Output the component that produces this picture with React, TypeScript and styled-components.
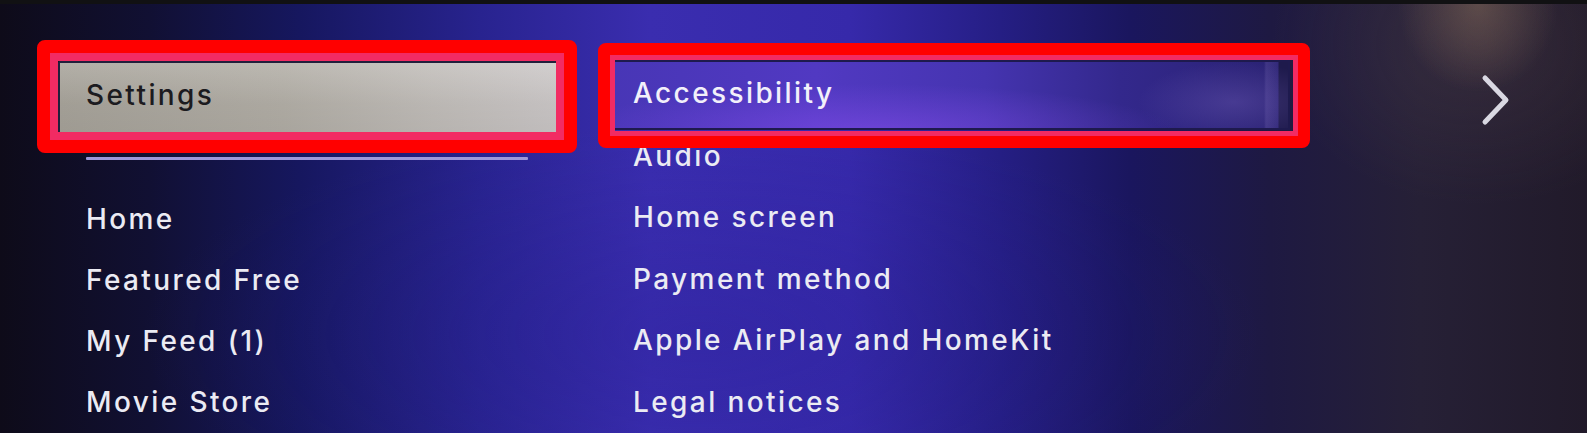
import styled, { createGlobalStyle } from 'styled-components';

const GlobalStyle = createGlobalStyle`
  html, body {
    margin: 0;
    padding: 0;
    background: #111113;
  }
  * {
    box-sizing: border-box;
  }
`;

const Screen = styled.div`
  width: 1587px;
  height: 433px;
  overflow: hidden;
  display: flex;
  flex-direction: column;
  font-family: Inter, 'DejaVu Sans', sans-serif;
  color: #ececf4;
`;

const TopStrip = styled.div`
  height: 4px;
  background: #111113;
`;

const Stage = styled.div`
  flex: 1;
  display: flex;
  align-items: flex-start;
  padding: 57px 0 0 58px;
  background:
    radial-gradient(ellipse 100px 110px at 1478px 0px, rgba(160, 128, 100, 0.4), rgba(160, 128, 100, 0) 80%),
    radial-gradient(ellipse 260px 200px at 1480px 40px, rgba(90, 72, 80, 0.3), rgba(90, 72, 80, 0) 80%),
    radial-gradient(ellipse 700px 260px at 700px 330px, rgba(40, 30, 150, 0.3), rgba(40, 30, 150, 0) 80%),
    linear-gradient(90deg, #0e0b19 0px, #111033 150px, #16175f 300px, #28238f 480px, #3a2daf 650px, #3629aa 850px, #251e84 1000px, #1a165e 1130px, #1e1942 1270px, #262036 1420px, #211a2a 1587px);
`;

const Column = styled.div<{ $width: number; $gap?: number }>`
  width: ${(p) => p.$width}px;
  margin-right: ${(p) => p.$gap ?? 0}px;
  display: flex;
  flex-direction: column;
`;

const FocusBox = styled.div<{ $variant: 'grey' | 'purple' }>`
  position: relative;
  z-index: 2;
  display: flex;
  align-items: center;
  font-size: 28px;
  font-weight: 500;
  letter-spacing: 2.4px;
  ${(p) =>
    p.$variant === 'grey'
      ? `
    height: 73px;
    padding: 0 0 4px 26px;
    border: 2px solid #221f3c;
    border-radius: 2px;
    color: #1c1b1f;
    background:
      linear-gradient(180deg, rgba(255,255,255,0.12), rgba(0,0,0,0.04) 60%, rgba(0,0,0,0.06)),
      linear-gradient(90deg, #a8a49b 0%, #b3afa7 45%, #c2beba 75%, #ccc8c8 100%);
  `
      : `
    margin-top: -1px;
    height: 70px;
    padding: 0 0 3px 19px;
    border: 2px solid #1e1a4e;
    color: #f2f0fa;
    background:
      radial-gradient(ellipse 380px 60px at 260px 70px, rgba(140, 80, 240, 0.5), rgba(140, 80, 240, 0) 80%),
      radial-gradient(ellipse 120px 50px at 620px 40px, rgba(120, 100, 190, 0.35), rgba(120, 100, 190, 0) 80%),
      linear-gradient(90deg, rgba(0,0,0,0) 0, rgba(0,0,0,0) 650px, rgba(110, 96, 170, 0.3) 652px, rgba(110, 96, 170, 0.12) 664px, #1e1a4c 665px),
      linear-gradient(90deg, #4836b6 0%, #5139c2 30%, #4534b0 55%, #33288c 75%, #2a2272 100%);
  `}

  &::before {
    content: '';
    position: absolute;
    pointer-events: none;
    ${(p) =>
      p.$variant === 'grey'
        ? `
      inset: -23px -19px -21px -23px;
      border: 13px solid #ff0000;
      border-radius: 8px;
      box-shadow: inset 0 0 0 8px #f22b63;
    `
        : `
      inset: -19px -22px -20px -16px;
      border: 12px solid #ff0000;
      border-radius: 8px;
      box-shadow: inset 0 0 0 5px #f22b63;
    `}
  }
`;

const Underline = styled.div`
  margin: 23px 32px 0 28px;
  height: 3px;
  background: #9d97d9;
  border-radius: 1px;
`;

const List = styled.ul<{ $top: number; $indent: number; $pitch: number }>`
  list-style: none;
  margin: ${(p) => p.$top}px 0 0;
  padding: 0 0 0 ${(p) => p.$indent}px;
  line-height: ${(p) => p.$pitch}px;
`;

const Item = styled.li`
  font-size: 28px;
  font-weight: 500;
  letter-spacing: 2.4px;
  white-space: nowrap;
  color: #ebebf3;
`;

const ChevronSlot = styled.div`
  padding: 13px 0 0 191px;
  display: flex;
`;

const Chevron = () => (
  <svg width="30" height="52" viewBox="0 0 30 52" fill="none">
    <polyline
      points="4,4 25,26 4,48"
      stroke="#d9d8e2"
      strokeWidth="5"
      strokeLinecap="round"
      strokeLinejoin="round"
    />
  </svg>
);

const homeMenu = ['Home', 'Featured Free', 'My Feed (1)', 'Movie Store'];
const settingsMenu = [
  'Audio',
  'Home screen',
  'Payment method',
  'Apple AirPlay and HomeKit',
  'Legal notices',
];

export default function App() {
  return (
    <>
      <GlobalStyle />
      <Screen>
        <TopStrip />
        <Stage>
          <Column $width={502} $gap={52}>
            <FocusBox $variant="grey">Settings</FocusBox>
            <Underline />
            <List $top={29} $indent={28} $pitch={61}>
              {homeMenu.map((label) => (
                <Item key={label}>{label}</Item>
              ))}
            </List>
          </Column>
          <Column $width={678}>
            <FocusBox $variant="purple">Accessibility</FocusBox>
            <List $top={-4} $indent={21} $pitch={61.4}>
              {settingsMenu.map((label) => (
                <Item key={label}>{label}</Item>
              ))}
            </List>
          </Column>
          <ChevronSlot>
            <Chevron />
          </ChevronSlot>
        </Stage>
      </Screen>
    </>
  );
}
